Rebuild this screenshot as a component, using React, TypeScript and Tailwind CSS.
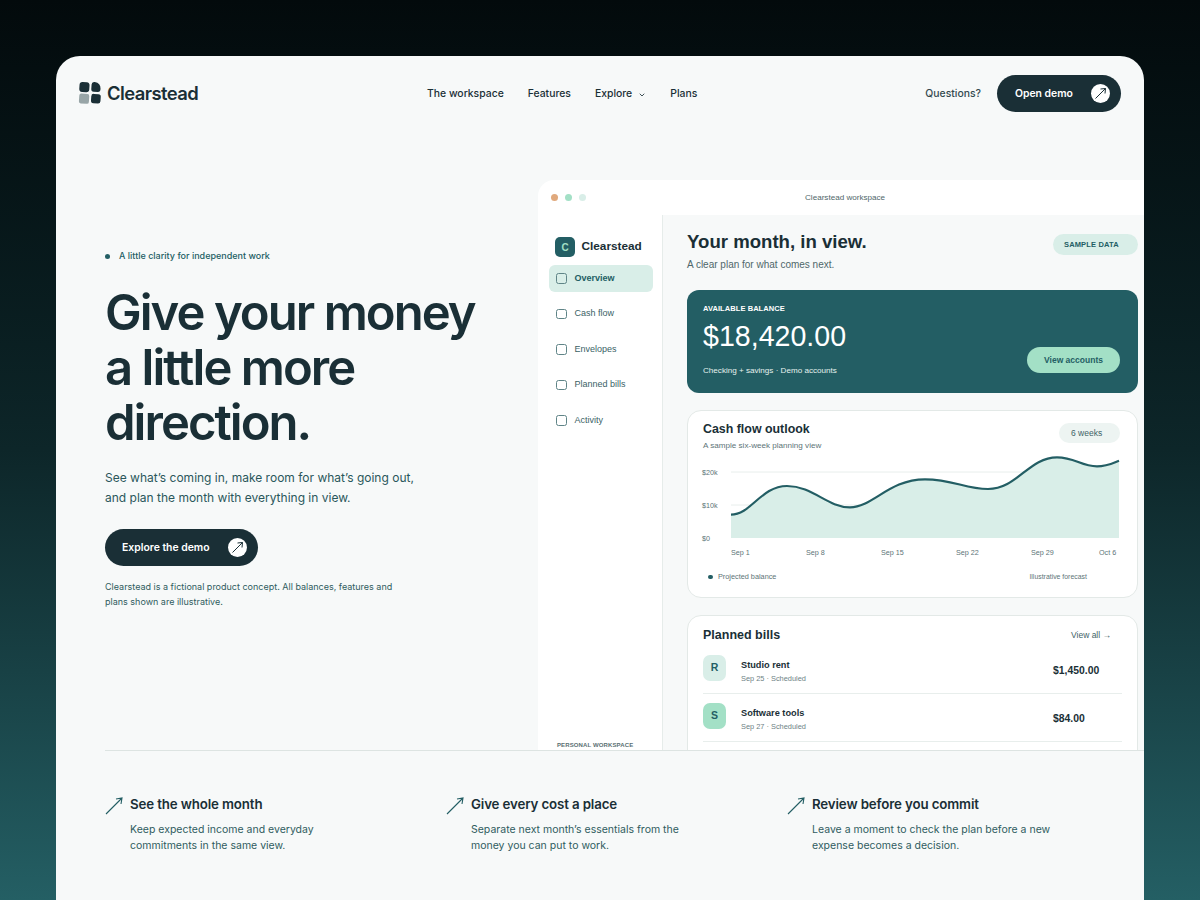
import React from "react";
import { ChevronDown } from "lucide-react";

const navLinks = ["The workspace", "Features", "Explore", "Plans"];
const sideItems = ["Overview", "Cash flow", "Envelopes", "Planned bills", "Activity"];
const xLabels = [
  { label: "Sep 1", x: 36 },
  { label: "Sep 8", x: 111 },
  { label: "Sep 15", x: 186 },
  { label: "Sep 22", x: 261 },
  { label: "Sep 29", x: 336 },
  { label: "Oct 6", x: 404 },
];
const features = [
  {
    title: "See the whole month",
    lines: ["Keep expected income and everyday", "commitments in the same view."],
  },
  {
    title: "Give every cost a place",
    lines: ["Separate next month’s essentials from the", "money you can put to work."],
  },
  {
    title: "Review before you commit",
    lines: ["Leave a moment to check the plan before a new", "expense becomes a decision."],
  },
];
const bills = [
  { letter: "R", name: "Studio rent", meta: "Sep 25 · Scheduled", amount: "$1,450.00", tone: "bg-[#d9eee8]" },
  { letter: "S", name: "Software tools", meta: "Sep 27 · Scheduled", amount: "$84.00", tone: "bg-[#a3e0c6]" },
];

const curve =
  "M36 59.7 C56 59.7 66 31 92 31 C118 31 132 52.3 155 52.3 C178 52.3 194 24.3 230 24.3 C258 24.3 270 34 293 34 C322 34 334 2.3 362 2.3 C380 2.3 386 11.3 402 11.3 C412 11.3 418 8 424 5.7";

const Logo = () => (
  <svg width="24" height="24" viewBox="0 0 24 24">
    <g transform="rotate(4 12 12)">
      <rect x="1" y="1.5" width="10" height="10" rx="3" fill="#1a2f36" />
      <path d="M13 3.5 Q13 .5 16 .8 Q22 1.5 22.2 7 Q22.4 10.5 19.5 10.5 L15.5 10.5 Q13 10.5 13 8 Z" fill="#1a2f36" />
      <rect x="1.5" y="13.2" width="10" height="9.8" rx="2" fill="#98a5a7" />
      <rect x="13.5" y="12.6" width="9.5" height="9.4" rx="2.5" fill="#1a2f36" />
    </g>
  </svg>
);

const DemoArrow = () => (
  <span className="flex h-[19px] w-[19px] items-center justify-center rounded-full bg-white">
    <svg width="15" height="15" viewBox="0 0 15 15" fill="none" stroke="#1a2f36" strokeWidth="1">
      <path d="M2.5 12.5 L12.5 2.5 M7.5 3 L12.5 2.5 L12 7.5" />
    </svg>
  </span>
);

const FeatureArrow = () => (
  <svg width="18" height="18" viewBox="0 0 18 18" fill="none" stroke="#235e64" strokeWidth="1.1" className="mt-[2px] shrink-0">
    <path d="M1 17 L17 1 M11 2 L17 1 L16 7" />
  </svg>
);

const CashFlowCard = () => (
  <div className="mt-[17px] h-[188px] rounded-[14px] border border-[#e3e9e7] bg-white">
    <div className="flex items-start justify-between pl-[15px] pr-[17px] pt-[10px]">
      <div>
        <div className="text-[12.4px] leading-[16px] font-bold text-[#1a2f36]">Cash flow outlook</div>
        <div className="mt-[3px] text-[8.1px] leading-[12px] text-[#5d7477]">A sample six-week planning view</div>
      </div>
      <div className="mt-[2px] flex h-[20px] w-[61px] items-center pl-[12px] rounded-full bg-[#edf4f2] text-[8.5px] text-[#3f6367]">
        6 weeks
      </div>
    </div>
    <svg width="440" height="118" viewBox="0 0 440 118" className="ml-[7px] mt-[3px] block">
      <line x1="36" x2="424" y1="17" y2="17" stroke="#e8eeec" />
      <line x1="36" x2="424" y1="50" y2="50" stroke="#e8eeec" />
      <path d={`${curve} L424 83 L36 83 Z`} fill="#d9eee8" />
      <path d={curve} fill="none" stroke="#235e64" strokeWidth="2.2" />
      {[
        ["$20k", 20],
        ["$10k", 53],
        ["$0", 86],
      ].map(([t, y]) => (
        <text key={t} x="7" y={y} fontSize="7.2" fill="#5d7477">
          {t}
        </text>
      ))}
      {xLabels.map((d) => (
        <text key={d.label} x={d.x} y="99.5" fontSize="7.2" fill="#5d7477">
          {d.label}
        </text>
      ))}
    </svg>
    <div className="-mt-[2px] flex items-center pl-[20px] text-[7.3px] leading-[12px] text-[#5d7477]">
      <span className="h-[4.5px] w-[4.5px] rounded-full bg-[#235e64]" />
      <span className="ml-[5.5px]">Projected balance</span>
      <span className="ml-[253px] text-[6.9px]">Illustrative forecast</span>
    </div>
  </div>
);

const PlannedBills = () => (
  <div className="mt-[17px] h-[160px] rounded-t-[14px] border border-[#e3e9e7] bg-white pl-[15px] pr-[15px] pt-[11px]">
    <div className="flex items-center justify-between pr-[11px]">
      <span className="text-[12.5px] leading-[16px] font-bold text-[#1a2f36]">Planned bills</span>
      <span className="text-[8.5px] text-[#3f6367]">View all →</span>
    </div>
    <div className="mt-[3px]">
      {bills.map((bill) => (
        <div key={bill.name} className="flex h-[48px] items-center border-b border-[#e8eeec] pb-[3px]">
          <div className={`flex h-[26px] w-[23px] items-center justify-center rounded-[7px] text-[10.5px] font-bold text-[#235e64] ${bill.tone}`}>
            {bill.letter}
          </div>
          <div className="ml-[15px] mt-[7px] flex-1">
            <div className="text-[9.2px] leading-[12px] font-bold text-[#1a2f36]">{bill.name}</div>
            <div className="mt-[3px] text-[7.4px] leading-[10px] text-[#6d8184]">{bill.meta}</div>
          </div>
          <div className="mt-[6px] w-[69px] text-[10.4px] font-bold text-[#1a2f36]">{bill.amount}</div>
        </div>
      ))}
    </div>
  </div>
);

const Workspace = () => (
  <div className="h-[570px] w-[606px] shrink-0 overflow-hidden rounded-tl-[16px] bg-white font-['Liberation_Sans',sans-serif]">
    <div className="flex h-[35px] items-center pl-[13px]">
      <span className="h-[7px] w-[7px] rounded-full bg-[#e0a97d]" />
      <span className="ml-[7px] h-[7px] w-[7px] rounded-full bg-[#a3e0c6]" />
      <span className="ml-[7px] h-[7px] w-[7px] rounded-full bg-[#d9eee8]" />
      <span className="ml-[219px] mt-[1px] text-[8.1px] text-[#4f676a]">Clearstead workspace</span>
    </div>
    <div className="flex h-[535px]">
      <aside className="relative w-[125px] shrink-0 border-r border-[#e6ecea] pl-[11px] pr-[9px] pt-[22px]">
        <div className="flex items-center pl-[6px]">
          <span className="flex h-[20px] w-[20px] items-center justify-center rounded-[5px] bg-[#235e64] text-[10px] font-bold text-[#a3e0c6]">C</span>
          <span className="ml-[6.5px] text-[11.8px] font-bold text-[#1a2f36]">Clearstead</span>
        </div>
        <div className="mt-[8px]">
          {sideItems.map((item, i) => (
            <div
              key={item}
              className={`flex h-[27px] items-center rounded-[6px] pl-[7px] text-[9px] mb-[8.5px] ${i === 0 ? "bg-[#d9eee8] font-bold text-[#235e64]" : "text-[#3a6266]"}`}
            >
              <span className="h-[10.5px] w-[10.5px] rounded-[2.5px] border border-[#5f8487]" />
              <span className="ml-[8px]">{item}</span>
            </div>
          ))}
        </div>
        <div className="absolute bottom-[1px] left-[19px] text-[6px] leading-[8px] font-bold tracking-[0.02em] text-[#5a6f72]">PERSONAL WORKSPACE</div>
      </aside>
      <main className="min-w-0 flex-1 bg-[#f7f9f9] pl-[24px] pr-[6px] pt-[15px]">
        <div className="flex items-start justify-between">
          <div>
            <h2 className="text-[18.6px] leading-[24px] font-bold text-[#1a2f36]">Your month, in view.</h2>
            <p className="mt-[4px] text-[10px] leading-[14px] text-[#4f676a]">A clear plan for what comes next.</p>
          </div>
          <span className="mt-[4px] flex h-[21px] w-[85px] items-center rounded-full bg-[#d9eee8] pl-[11px] text-[7.5px] font-bold tracking-[0.02em] text-[#235e64]">SAMPLE DATA</span>
        </div>
        <div className="mt-[18px] flex h-[103px] items-end justify-between rounded-[12px] bg-[#235e64] pb-[16px] pl-[16px] pr-[18px]">
          <div className="text-white">
            <div className="text-[7.5px] leading-[10px] font-bold tracking-[0.01em]">AVAILABLE BALANCE</div>
            <div className="mt-[5px] text-[28.6px] leading-[34px]">$18,420.00</div>
            <div className="mt-[12px] text-[8.1px] leading-[12px] text-[#e5f1ee]">Checking + savings · Demo accounts</div>
          </div>
          <span className="mb-[4px] flex h-[26px] w-[93px] items-center justify-center rounded-full bg-[#a3e0c6] text-[8.5px] font-bold text-[#235e64]">View accounts</span>
        </div>
        <CashFlowCard />
        <PlannedBills />
      </main>
    </div>
  </div>
);

export default function App() {
  return (
    <div className="h-[900px] overflow-hidden bg-gradient-to-b from-[#030a0c] via-[#0d2629] to-[#245f64] px-[56px] pt-[56px] font-['Inter',sans-serif]">
      <div className="h-[844px] overflow-hidden rounded-t-[24px] bg-[#f7f9f9]">
        <header className="flex h-[74px] items-center pl-[22px] pr-[23px]">
          <Logo />
          <span className="ml-[5px] mt-[1px] w-[91px] text-[18.4px] font-semibold tracking-[-0.03em] text-[#1a2f36]">Clearstead</span>
          <nav className="ml-[229px] mt-[1px] flex items-center gap-[24px] text-[10.4px] font-medium text-[#1a2f36]">
            {navLinks.map((link) => (
              <span key={link} className="flex items-center">
                {link}
                {link === "Explore" && <ChevronDown size={8} strokeWidth={2.5} className="ml-[6px] mt-[4px]" />}
              </span>
            ))}
          </nav>
          <span className="ml-auto mt-[1px] text-[10.4px] font-medium text-[#33494f]">Questions?</span>
          <button className="ml-[16px] flex h-[37px] w-[124px] items-center justify-between rounded-full bg-[#1a2f36] pl-[18px] pr-[11px] text-[10.4px] font-semibold text-white">
            <span className="mt-[1px]">Open demo</span>
            <DemoArrow />
          </button>
        </header>
        <section className="mt-[50px] flex">
          <div className="w-[482px] shrink-0 pl-[49px] pt-[70px]">
            <div className="flex items-center text-[9px] leading-[12px] font-medium text-[#235e64]">
              <span className="h-[5px] w-[5px] rounded-full bg-[#235e64]" />
              <span className="ml-[9px]">A little clarity for independent work</span>
            </div>
            <h1 className="mt-[23px] text-[49px] leading-[55px] font-semibold tracking-[-0.04em] text-[#1a2f36]">
              Give your money
              <br />a little more
              <br />
              direction.
            </h1>
            <p className="mt-[18px] text-[12px] leading-[20px] text-[#2a575b]">
              See what’s coming in, make room for what’s going out,
              <br />
              and plan the month with everything in view.
            </p>
            <button className="mt-[21px] flex h-[37px] w-[153px] items-center justify-between rounded-full bg-[#1a2f36] pl-[17px] pr-[11px] text-[10.4px] font-semibold text-white">
              <span className="mt-[1px]">Explore the demo</span>
              <DemoArrow />
            </button>
            <p className="mt-[13px] text-[9px] leading-[15px] text-[#2f5c60]">
              Clearstead is a fictional product concept. All balances, features and
              <br />
              plans shown are illustrative.
            </p>
          </div>
          <Workspace />
        </section>
        <section className="ml-[49px] grid grid-cols-[341px_341px_1fr] border-t border-[#dde4e2] pt-[44px]">
          {features.map((f) => (
            <div key={f.title} className="flex gap-[7px]">
              <FeatureArrow />
              <div>
                <h3 className="text-[13.3px] leading-[18px] font-semibold tracking-[-0.01em] text-[#1a2f36]">{f.title}</h3>
                <p className="mt-[9px] text-[10.5px] leading-[16px] text-[#2f5c60]">
                  {f.lines[0]}
                  <br />
                  {f.lines[1]}
                </p>
              </div>
            </div>
          ))}
        </section>
      </div>
    </div>
  );
}
